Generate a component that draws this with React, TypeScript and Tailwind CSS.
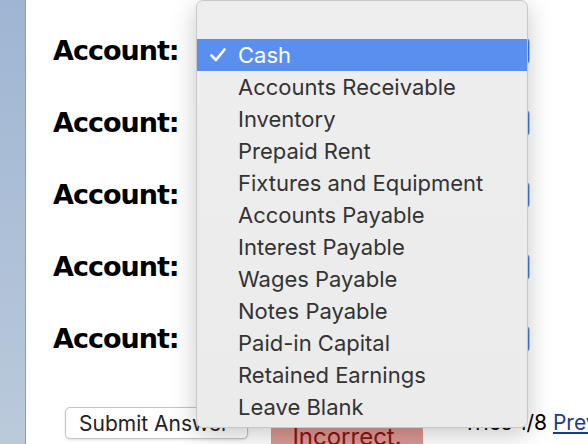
const options = [
  '',
  'Cash',
  'Accounts Receivable',
  'Inventory',
  'Prepaid Rent',
  'Fixtures and Equipment',
  'Accounts Payable',
  'Interest Payable',
  'Wages Payable',
  'Notes Payable',
  'Paid-in Capital',
  'Retained Earnings',
  'Leave Blank',
]

function AccountRow() {
  return (
    <div className="h-[72px] flex items-center">
      <div className="w-[143px] shrink-0 font-['DejaVu_Sans',sans-serif] font-bold text-[27px] tracking-[-1px] text-black">
        Account:
      </div>
      <div className="w-[334px] shrink-0 h-[28px] flex rounded-[5px] border border-[#c6c6c6] bg-white overflow-hidden">
        <div className="flex-1"></div>
        <div className="w-[22px] bg-[#3f76e3]"></div>
      </div>
    </div>
  )
}

export default function App() {
  return (
    <div className="w-[588px] h-[444px] flex overflow-hidden relative font-['Inter',sans-serif]">
      {/* window sidebar */}
      <div className="w-[26px] shrink-0 bg-gradient-to-b from-[#9fb5d3] to-[#bbcadb] border-r border-[#8d9db3]"></div>

      <main className="flex-1 min-w-0 bg-white pl-[27px] pt-[15px]">
        <AccountRow />
        <AccountRow />
        <AccountRow />
        <AccountRow />
        <AccountRow />

        <div className="flex items-start mt-[32px] whitespace-nowrap">
          <button className="shrink-0 ml-[12px] w-[183px] h-[32px] rounded-[5px] border border-[#c4c4c4] bg-white text-[21px] text-[#222] text-left pl-[13px] shadow-sm">
            Submit Answer
          </button>
          <div className="shrink-0 ml-[23px] -mt-[7px] w-[152px] h-[52px] bg-[#db9893] flex items-center justify-center text-[24px] text-[#8a1212] pt-[22px]">
            Incorrect.
          </div>
          <div className="shrink-0 ml-[40px] text-[21px] text-black leading-[32px]">
            Tries 1/8 <span className="text-[#1b3c8c] underline">Previous Tries</span>
          </div>
        </div>
      </main>

      {/* open select menu */}
      <div className="absolute left-[196px] top-0 w-[332px] h-[428px] rounded-[7px] bg-gradient-to-b from-[#eeeeee] to-[#ebebeb] border border-[#c8c8c8] shadow-[0_6px_24px_rgba(0,0,0,0.22)] pt-[6px] overflow-hidden">
        {options.map((o, i) => (
          <div
            key={i}
            className={
              'h-[32px] flex items-center text-[22px] ' +
              (o === 'Cash' ? 'bg-[#5a8ff0] text-white' : 'text-[#333333]')
            }
          >
            <div className="w-[41px] flex justify-center">
              {o === 'Cash' && (
                <svg width="16" height="14" viewBox="0 0 16 14" fill="none">
                  <path d="M1.5 7.5 L6 12 L14.5 1.5" stroke="white" strokeWidth="2.6" strokeLinecap="round" strokeLinejoin="round" />
                </svg>
              )}
            </div>
            <span>{o}</span>
          </div>
        ))}
      </div>
    </div>
  )
}
